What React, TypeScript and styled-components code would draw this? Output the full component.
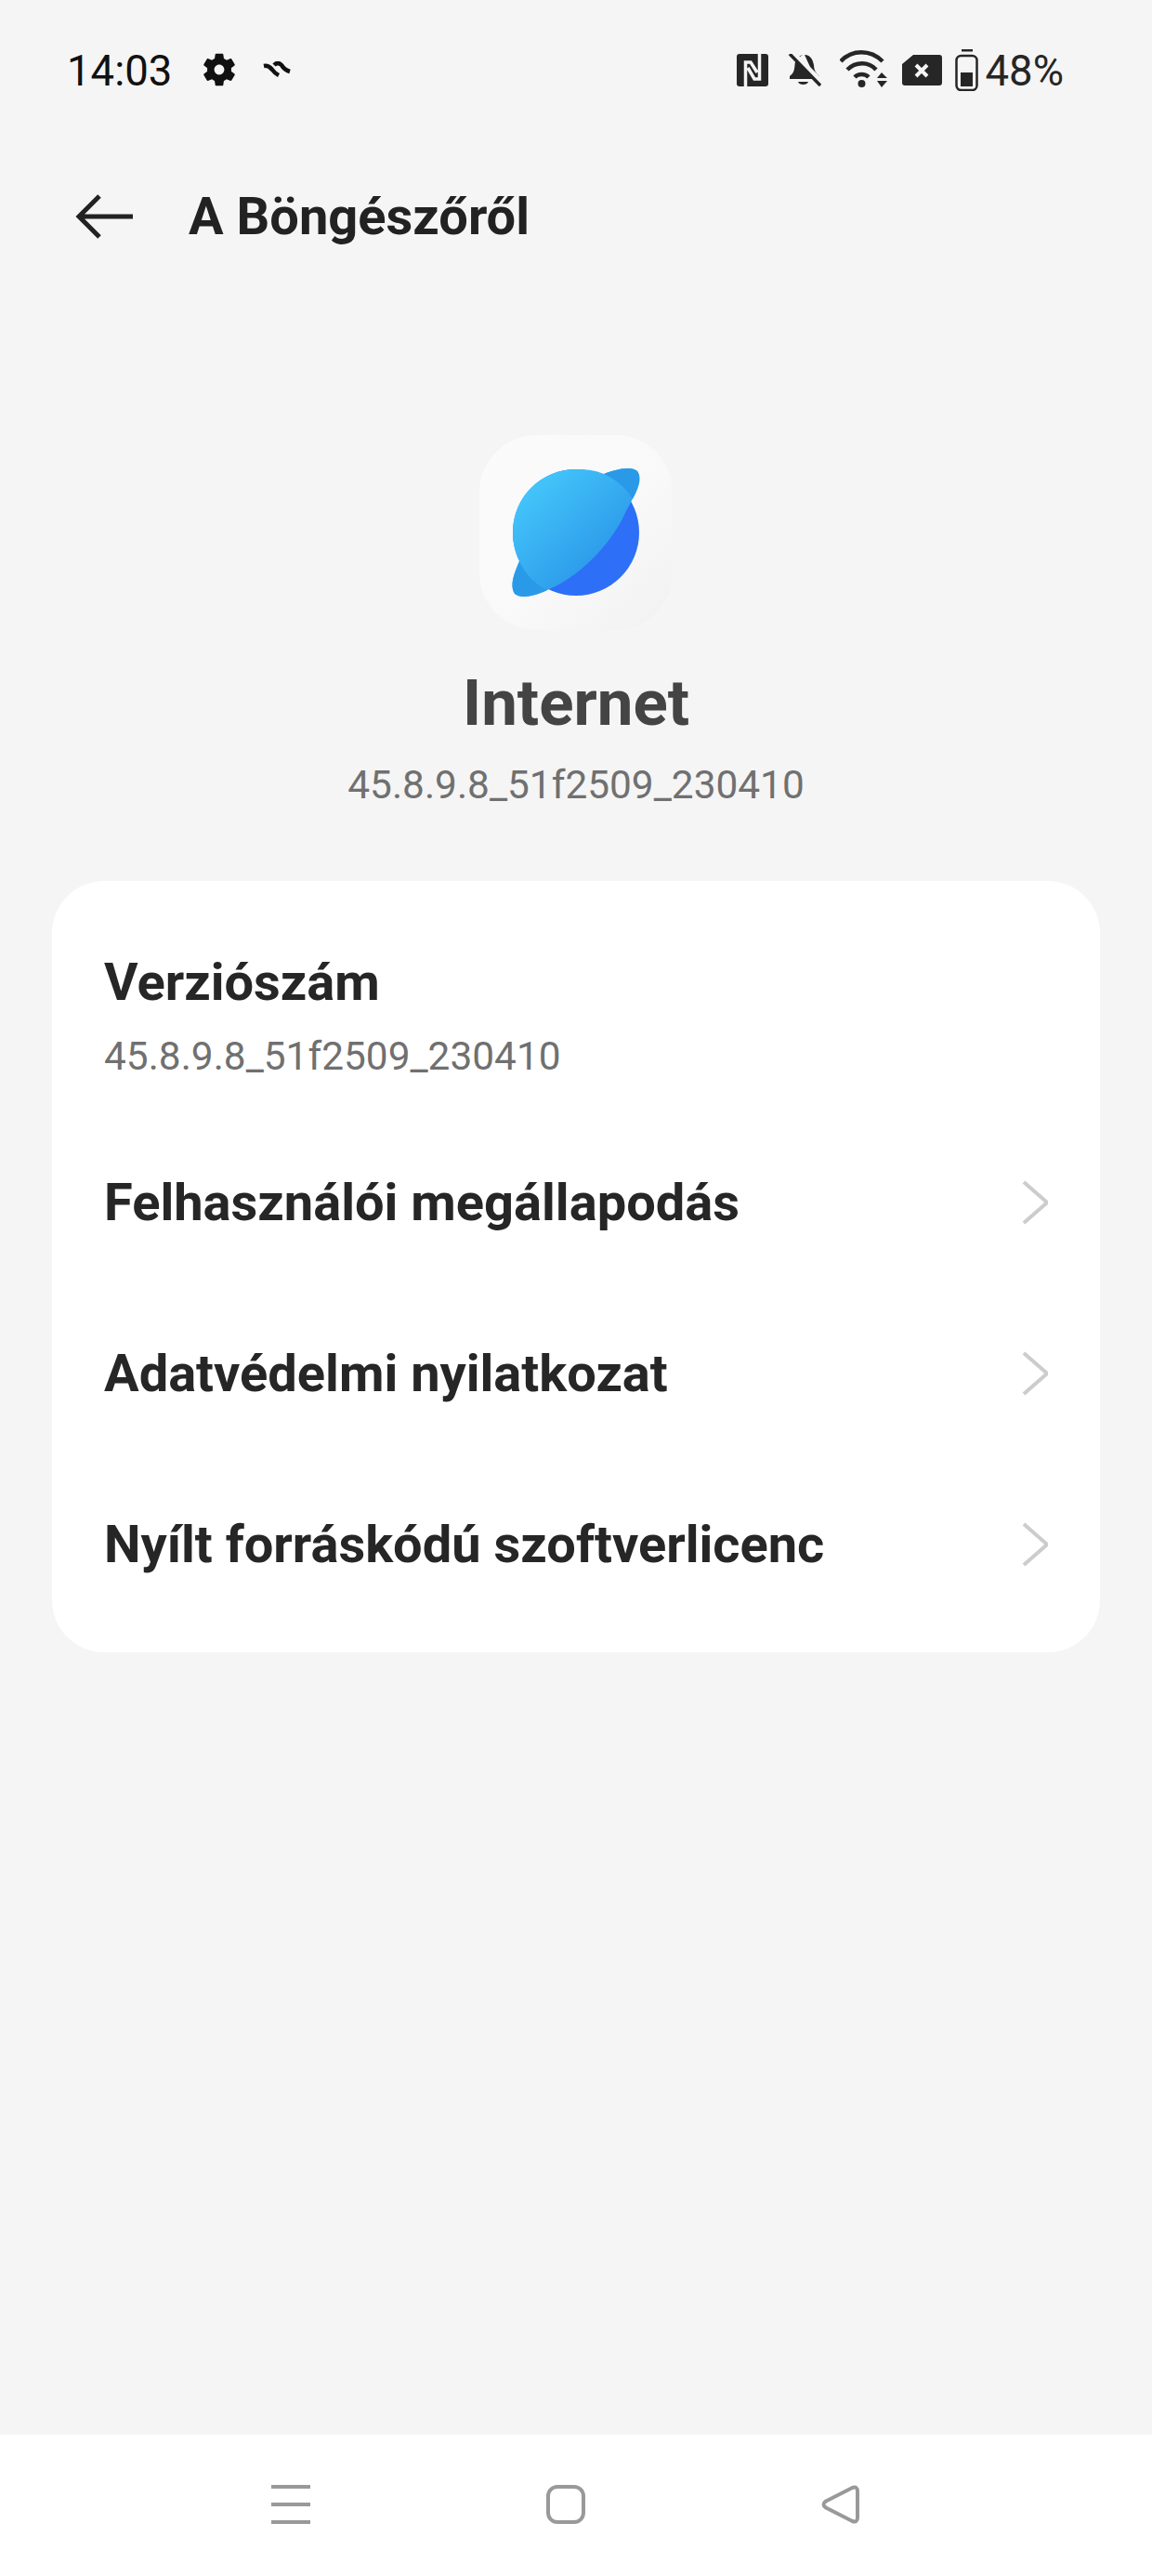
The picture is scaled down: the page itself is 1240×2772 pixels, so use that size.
import React from 'react';
import styled, { createGlobalStyle } from 'styled-components';

const GlobalStyle = createGlobalStyle`
  html, body {
    margin: 0;
    padding: 0;
    background: #f5f5f5;
  }
`;

const Page = styled.div`
  width: 1240px;
  height: 2772px;
  background: #f5f5f5;
  font-family: Roboto, 'Liberation Sans', sans-serif;
  display: flex;
  flex-direction: column;
`;

const StatusBar = styled.div`
  height: 150px;
  padding: 0 95px 0 72px;
  display: flex;
  align-items: center;
  justify-content: space-between;
  color: #111;
  font-size: 45.5px;
`;

const StatusLeft = styled.div`
  display: flex;
  align-items: center;
`;

const StatusRight = styled.div`
  display: flex;
  align-items: center;
  color: #262626;
`;

const StatusText = styled.span<{ $gap: number }>`
  margin-right: ${(p) => p.$gap}px;
  padding-top: 3px;
  line-height: 1;
`;

const Glyph = styled.svg<{ $gap?: number }>`
  display: block;
  flex: none;
  margin-right: ${(p) => p.$gap || 0}px;
`;

const TopBar = styled.div`
  height: 166px;
  padding-left: 81px;
  display: flex;
  align-items: center;
`;

const PageTitle = styled.h1`
  margin: 0 0 0 60px;
  font-size: 56px;
  font-weight: 700;
  color: #222;
`;

const Hero = styled.div`
  padding-top: 152px;
  display: flex;
  flex-direction: column;
  align-items: center;
`;

const AppIcon = styled.div`
  width: 208px;
  height: 210px;
  border-radius: 62px;
  background: linear-gradient(135deg, #fbfbfb 0%, #f9f9f9 55%, #f1f1f1 100%);
  display: flex;
  align-items: center;
  justify-content: center;
`;

const AppName = styled.div`
  margin-top: 39px;
  font-size: 69px;
  line-height: 80px;
  font-weight: 700;
  color: #444;
`;

const AppVersion = styled.div`
  margin-top: 24px;
  font-size: 42.4px;
  line-height: 48px;
  color: #707070;
`;

const Card = styled.div`
  margin: 79px 56px 0;
  height: 830px;
  padding-top: 70px;
  box-sizing: border-box;
  background: #fff;
  border-radius: 56px;
  display: flex;
  flex-direction: column;
`;

const InfoBlock = styled.div`
  padding-left: 56px;
  height: 184px;
`;

const RowTitle = styled.div`
  font-size: 56px;
  line-height: 78px;
  font-weight: 700;
  color: #262626;
`;

const RowSub = styled.div`
  margin-top: 17px;
  font-size: 42.4px;
  line-height: 48px;
  color: #707070;
`;

const LinkRow = styled.div`
  height: 184px;
  padding: 0 56px;
  display: flex;
  align-items: center;
  justify-content: space-between;
`;

const Spacer = styled.div`
  flex: 1;
`;

const NavBar = styled.div`
  height: 152px;
  box-sizing: border-box;
  padding: 0 0 2px 292px;
  background: #fff;
  display: flex;
  align-items: center;
`;

const NavSlot = styled.div`
  width: 296px;
`;

const NAV_ITEMS = ['Felhasználói megállapodás', 'Adatvédelmi nyilatkozat', 'Nyílt forráskódú szoftverlicenc'];

const GEAR =
  'M19.14 12.94c.04-.3.06-.61.06-.94 0-.32-.02-.64-.07-.94l2.03-1.58c.18-.14.23-.41.12-.61l-1.92-3.32c-.12-.22-.37-.29-.59-.22l-2.39.96c-.5-.38-1.03-.7-1.62-.94l-.36-2.54c-.04-.24-.24-.41-.48-.41h-3.84c-.24 0-.43.17-.47.41l-.36 2.54c-.59.24-1.13.57-1.62.94l-2.39-.96c-.22-.08-.47 0-.59.22L2.74 8.87c-.12.21-.08.47.12.61l2.03 1.58c-.05.3-.09.63-.09.94s.02.64.07.94l-2.03 1.58c-.18.14-.23.41-.12.61l1.92 3.32c.12.22.37.29.59.22l2.39-.96c.5.38 1.03.7 1.62.94l.36 2.54c.05.24.24.41.48.41h3.84c.24 0 .44-.17.47-.41l.36-2.54c.59-.24 1.13-.56 1.62-.94l2.39.96c.22.08.47 0 .59-.22l1.92-3.32c.12-.22.07-.47-.12-.61l-2.01-1.58zM12 15c-1.65 0-3-1.35-3-3s1.35-3 3-3 3 1.35 3 3-1.35 3-3 3z';

const Chevron = () => (
  <Glyph width="28" height="48" viewBox="0 0 28 48">
    <path d="M2 2 L26 23 Q26.500 24 26 25 L2 46" fill="none" stroke="#ccc" strokeWidth="4" />
  </Glyph>
);

const PlanetIcon = () => (
  <Glyph width="138" height="138" viewBox="0 0 138 138">
    <defs>
      <linearGradient id="planetFront" x1="0.1" y1="0.1" x2="0.75" y2="0.8">
        <stop offset="0" stopColor="#45c8fb" />
        <stop offset="1" stopColor="#2a96e8" />
      </linearGradient>
    </defs>
    <circle cx="69" cy="69" r="68" fill="#2e6ff7" />
    <path
      d="M135 3 C128 -3 112 1 99 6 C88 1.500 79 1 69 1 C31 1 1 31 1 69 C1 79 3 90 8 100 C3 112 -3 126 3 135 C10 141 25 137 38 131 C70 118 105 85 122 48 C128 37 142 13 135 3 Z"
      fill="url(#planetFront)"
    />
    <path d="M99 6 C112 1 128 -3 135 3 C141 11 135 24 130 33 C122 20 112 12 99 6 Z" fill="#2a9ae8" />
    <path d="M8 100 C3 112 -3 126 3 135 C10 141 25 137 38 131 C25 125 14 113 8 100 Z" fill="#2a9ae8" />
  </Glyph>
);

export default function App() {
  return (
    <Page>
      <GlobalStyle />
      <StatusBar>
        <StatusLeft>
          <StatusText $gap={33}>14:03</StatusText>
          <Glyph $gap={29} width="36" height="36" viewBox="2 2 20 20">
            <path d={GEAR} fill="#111" />
          </Glyph>
          <Glyph width="30" height="18" viewBox="0 0 30 18">
            <path d="M1 5 Q6 4 10 9 Q13 13 17 15 M12 4 Q16 0 20 4 Q23 9 29 11" fill="none" stroke="#111" strokeWidth="4.500" />
          </Glyph>
        </StatusLeft>
        <StatusRight>
          <Glyph $gap={21} width="34" height="35" viewBox="0 0 34 35">
            <rect width="34" height="35" rx="3" fill="#262626" />
            <path d="M9.500 35 V9 H15 L22 20 M24.500 0 V27 H19 L12 15" fill="none" stroke="#f5f5f5" strokeWidth="3.500" />
          </Glyph>
          <Glyph $gap={20} width="36" height="35" viewBox="0 0 36 35">
            <path d="M18 1 C11 1 8 6 7.500 12 C7 18 6 21 2 24 V27 H30 Z M11 5 C13 3 15 1 18 1 C25 1 27 7 28 12 C28 17 30 21 34 24 V27 H31 L10 6 Z" fill="#262626" />
            <path d="M11 30 H22 C21 34 12 34 11 30 Z" fill="#262626" />
            <path d="M5 0 L36 31" stroke="#f5f5f5" strokeWidth="7" />
            <path d="M2 0 L35 34" stroke="#262626" strokeWidth="3.500" />
          </Glyph>
          <Glyph $gap={16} width="51" height="42" viewBox="0 0 51 42">
            <path d="M1 12 C13 -1 33 -1 46 12" fill="none" stroke="#262626" strokeWidth="4.500" />
            <path d="M8 21 C17 12 31 12 39 21" fill="none" stroke="#262626" strokeWidth="4.500" />
            <path d="M16 29 C20 25 27 25 31 29" fill="none" stroke="#262626" strokeWidth="4.500" />
            <circle cx="23.500" cy="36" r="4" fill="#262626" />
            <path d="M40 30 L45 24 L51 30 Z M40 33 H51 L45 40 Z" fill="#262626" />
          </Glyph>
          <Glyph $gap={14} width="43" height="33" viewBox="0 0 43 33">
            <path d="M12 0 H40 Q43 0 43 3 V30 Q43 33 40 33 H3 Q0 33 0 30 V10 Z" fill="#262626" />
            <path d="M15 11 L27 23 M27 11 L15 23" stroke="#f5f5f5" strokeWidth="4" />
          </Glyph>
          <Glyph $gap={8} width="25" height="45" viewBox="0 0 25 45">
            <rect x="7" y="0" width="12" height="2.500" fill="#262626" />
            <rect x="1.500" y="7" width="22" height="37" rx="5" fill="none" stroke="#262626" strokeWidth="2.500" />
            <rect x="6" y="25" width="13" height="15" fill="#262626" />
          </Glyph>
          <StatusText $gap={0}>48%</StatusText>
        </StatusRight>
      </StatusBar>

      <TopBar>
        <Glyph width="62" height="48" viewBox="0 0 62 48">
          <path d="M62 24 H4 M26 2 L4 24 L26 46" fill="none" stroke="#222" strokeWidth="5" />
        </Glyph>
        <PageTitle>A Böngészőről</PageTitle>
      </TopBar>

      <Hero>
        <AppIcon>
          <PlanetIcon />
        </AppIcon>
        <AppName>Internet</AppName>
        <AppVersion>45.8.9.8_51f2509_230410</AppVersion>
      </Hero>

      <Card>
        <InfoBlock>
          <RowTitle>Verziószám</RowTitle>
          <RowSub>45.8.9.8_51f2509_230410</RowSub>
        </InfoBlock>
        {NAV_ITEMS.map((label) => (
          <LinkRow key={label}>
            <RowTitle>{label}</RowTitle>
            <Chevron />
          </LinkRow>
        ))}
      </Card>

      <Spacer />

      <NavBar>
        <NavSlot>
          <Glyph width="42" height="42" viewBox="0 0 42 42">
            <path d="M0 2 H42 M0 21 H42 M0 40 H42" stroke="#999" strokeWidth="4" />
          </Glyph>
        </NavSlot>
        <NavSlot>
          <Glyph width="42" height="42" viewBox="0 0 42 42">
            <rect x="2" y="2" width="38" height="38" rx="10" fill="none" stroke="#999" strokeWidth="4" />
          </Glyph>
        </NavSlot>
        <NavSlot>
          <Glyph width="41" height="42" viewBox="0 0 41 42">
            <path d="M33.500 3 Q39 1 39 7 V35 Q39 41 33.500 39 L5 24.500 Q0 21 5 17.500 Z" fill="none" stroke="#999" strokeWidth="4" strokeLinejoin="round" />
          </Glyph>
        </NavSlot>
      </NavBar>
    </Page>
  );
}
